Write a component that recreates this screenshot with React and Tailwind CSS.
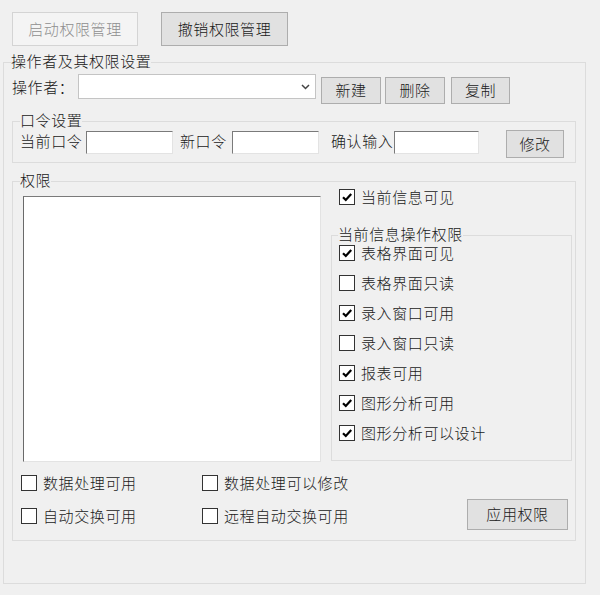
// Operator permission settings dialog
import React from 'react';

const font = { fontFamily: '"Noto Sans CJK SC", "Noto Sans", sans-serif' };

function CheckBox({ checked, label, className = '' }) {
    return (
        <div className={`flex items-center gap-[6px] h-[16px] ${className}`}>
            <div className="w-[16px] h-[16px] border border-[#333333] bg-white flex items-center justify-center shrink-0">
                {checked && (
                    <svg width="12" height="12" viewBox="0 0 12 12">
                        <path d="M2 6.2 L4.8 9 L10.2 3" fill="none" stroke="#000" strokeWidth="2.2" />
                    </svg>
                )}
            </div>
            <span className="leading-[16px] whitespace-nowrap">{label}</span>
        </div>
    );
}

function Button({ children, className = '', disabled }) {
    return (
        <div
            className={`flex items-center justify-center border shrink-0 ${
                disabled
                    ? 'bg-[#f4f4f4] border-[#d4d4d4] text-[#8f8f8f]'
                    : 'bg-[#e1e1e1] border-[#adadad] text-[#1a1a1a]'
            } ${className}`}
        >
            {children}
        </div>
    );
}

function TextInput({ className = '' }) {
    return (
        <div
            className={`bg-white border-t border-l border-t-[#7a7a7a] border-l-[#7a7a7a] border-r border-b border-r-[#e3e3e3] border-b-[#e3e3e3] shrink-0 ${className}`}
        />
    );
}

export default function App() {
    return (
        <div
            className="w-[600px] h-[595px] bg-[#f0f0f0] text-[15px] font-light tracking-[0.6px] text-[#1a1a1a] overflow-hidden"
            style={font}
        >
            {/* top buttons */}
            <div className="flex pt-[12px] pl-[12px]">
                <Button disabled className="w-[126px] h-[34px]">启动权限管理</Button>
                <Button className="w-[127px] h-[34px] ml-[23px]">撤销权限管理</Button>
            </div>

            {/* operator group */}
            <fieldset className="ml-[3px] mt-[6px] w-[583px] h-[532px] border border-[#dcdcdc] px-[7px]">
                <legend className="leading-[18px] pt-0 px-0 pb-[3px]">操作者及其权限设置</legend>

                <div className="flex items-start mt-px">
                    <div className="ml-px w-[66px] leading-[18px] mt-[4px]">操作者：</div>
                    <div className="w-[238px] h-[25px] bg-white border border-[#c4c4c4] flex items-center justify-end pr-[5px]">
                        <svg width="9" height="6" viewBox="0 0 9 6">
                            <path d="M1 1 L4.5 4.5 L8 1" fill="none" stroke="#444" strokeWidth="1.5" />
                        </svg>
                    </div>
                    <Button className="ml-[5px] mt-[3px] w-[60px] h-[27px]">新建</Button>
                    <Button className="ml-[4px] mt-[3px] w-[60px] h-[27px]">删除</Button>
                    <Button className="ml-[6px] mt-[3px] w-[59px] h-[27px]">复制</Button>
                </div>

                {/* password group */}
                <fieldset className="ml-px mt-[7px] w-[564px] h-[52px] border border-[#dcdcdc] px-[7px]">
                    <legend className="leading-[18px] pt-0 px-0 pb-[3px]">口令设置</legend>
                    <div className="flex items-start -mt-[2px]">
                        <div className="mt-px h-[22px] leading-[20px] w-[66px]">当前口令</div>
                        <TextInput className="mt-px w-[87px] h-[23px]" />
                        <div className="mt-px h-[22px] leading-[20px] ml-[7px] w-[52px]">新口令</div>
                        <TextInput className="mt-px w-[87px] h-[23px]" />
                        <div className="mt-px h-[22px] leading-[20px] ml-[12px] w-[63px]">确认输入</div>
                        <TextInput className="mt-px w-[85px] h-[23px]" />
                        <Button className="ml-[27px] w-[58px] h-[28px]">修改</Button>
                    </div>
                </fieldset>

                {/* permission group */}
                <fieldset className="ml-px mt-[8px] w-[564px] h-[370px] border border-[#dcdcdc] pl-[7px] pr-[3px]">
                    <legend className="leading-[18px] pt-0 px-0 pb-[3px]">权限</legend>
                    <div className="flex items-start">
                        <div className="ml-[3px] mt-[4px] w-[298px] h-[266px] bg-white border-t border-l border-t-[#7a7a7a] border-l-[#6a6a6a] border-r border-b border-r-[#e3e3e3] border-b-[#e3e3e3]" />
                        <div className="ml-[10px] -mt-[3px] flex flex-col">
                            <CheckBox checked label="当前信息可见" className="ml-[8px]" />
                            <fieldset className="mt-[20px] w-[241px] h-[236px] border border-[#dcdcdc] pl-[6px]">
                                <legend className="leading-[18px] pt-0 px-0 pb-[3px]">当前信息操作权限</legend>
                                <div className="flex flex-col gap-[14px] -mt-px ml-px">
                                    <CheckBox checked label="表格界面可见" />
                                    <CheckBox label="表格界面只读" />
                                    <CheckBox checked label="录入窗口可用" />
                                    <CheckBox label="录入窗口只读" />
                                    <CheckBox checked label="报表可用" />
                                    <CheckBox checked label="图形分析可用" />
                                    <CheckBox checked label="图形分析可以设计" />
                                </div>
                            </fieldset>
                        </div>
                    </div>

                    <div className="flex items-start">
                        <div className="mt-[13px] ml-px grid grid-cols-[181px_auto] gap-y-[17px]">
                            <CheckBox label="数据处理可用" />
                            <CheckBox label="数据处理可以修改" />
                            <CheckBox label="自动交换可用" />
                            <CheckBox label="远程自动交换可用" />
                        </div>
                        <Button className="ml-auto mr-[4px] mt-[37px] w-[101px] h-[31px]">应用权限</Button>
                    </div>
                </fieldset>
            </fieldset>
        </div>
    );
}
